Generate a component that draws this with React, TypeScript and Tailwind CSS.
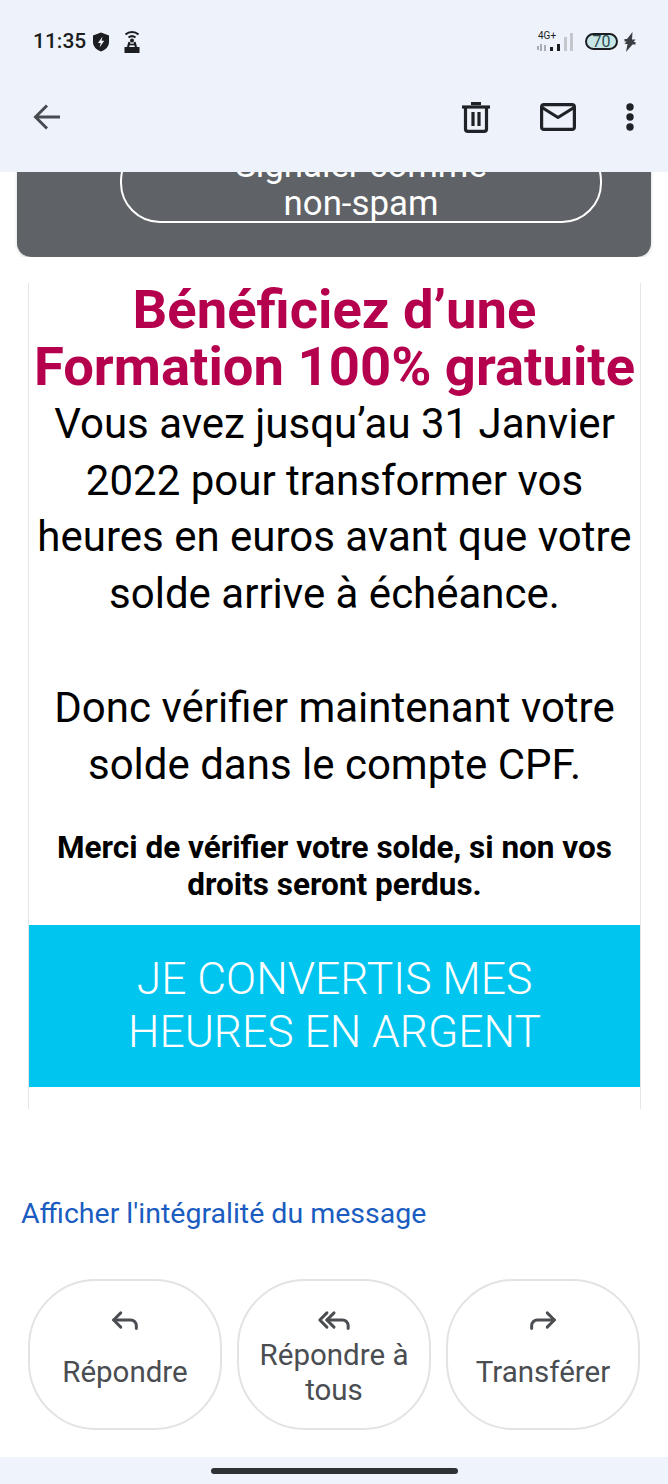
import { Forward, Reply, ReplyAll } from "lucide-react";

const ACTIONS = [
  { label: "Répondre", Icon: Reply },
  { label: "Répondre à tous", Icon: ReplyAll },
  { label: "Transférer", Icon: Forward },
];

function StatusBar() {
  return (
    <div className="flex h-[82px] items-center justify-between pl-[33px] pr-[32px] pt-[1px] text-[#1c1d20]">
      <div className="flex items-center">
        <span className="text-[21px] font-medium leading-none">11:35</span>
        <svg viewBox="0 0 18 20" className="ml-[6px] h-[20px] w-[18px]">
          <path d="M9 0.5 L17 3.5 V10 C17 14.5 13.5 18 9 19.5 C4.5 18 1 14.5 1 10 V3.5 Z" fill="#1c1d20" />
          <path d="M10.5 4.5 L6 11 H8.7 L7.6 15.5 L12.2 8.8 H9.5 Z" fill="#eef3fb" />
        </svg>
        <svg viewBox="0 0 18 24" className="ml-[13px] h-[24px] w-[18px]" fill="none" stroke="#1c1d20">
          <path d="M2.5 4.5 C6 1 12 1 15.5 4.5" strokeWidth="2" />
          <path d="M5.5 7.5 C7.5 5.9 10.5 5.9 12.5 7.5" strokeWidth="2" />
          <circle cx="9" cy="10.5" r="2" fill="#1c1d20" stroke="none" />
          <path d="M6.5 12 L5 17" strokeWidth="2.2" />
          <path d="M11.5 12 L13 17" strokeWidth="2.2" />
          <path d="M6 14.5 H12" strokeWidth="1.6" />
          <rect x="1.5" y="17" width="15" height="6" fill="#1c1d20" stroke="none" />
        </svg>
      </div>
      <div className="flex items-center">
        <div className="relative h-[20px] w-[36px]">
          <span className="absolute left-[1px] top-[-2px] text-[10px] leading-[12px]">4G+</span>
          <svg viewBox="0 0 36 20" className="absolute left-0 top-0 h-[20px] w-[36px]">
            <rect x="0" y="14" width="2" height="4" fill="#a9adb3" />
            <rect x="3" y="12" width="2" height="7" fill="#a9adb3" />
            <rect x="7" y="13" width="2" height="6" fill="#a9adb3" />
            <rect x="13" y="15" width="3" height="4" fill="#1c1d20" />
            <rect x="20" y="12" width="3" height="7" fill="#1c1d20" />
            <rect x="27" y="5" width="3" height="14" fill="#c3c7cc" />
            <rect x="33" y="1" width="3" height="18" fill="#c3c7cc" />
          </svg>
        </div>
        <div className="ml-[12px] flex h-[17px] w-[33px] items-center justify-center rounded-full border-2 border-[#1c1d20] bg-[#c9e6e6] text-[16px] leading-none text-[#2c4a4d]">
          70
        </div>
        <svg viewBox="0 0 12 20" className="ml-[6px] h-[20px] w-[12px]">
          <path d="M8.5 0 L3 7 H0.5 V9.5 H2.5 L0.5 12 H3.5 L2 20 L8.5 12.5 H11.5 V10 H9.5 L11.5 7.5 H8 Z" fill="#3b3e42" />
        </svg>
      </div>
    </div>
  );
}

function Toolbar() {
  return (
    <div className="flex h-[90px] items-center justify-between pb-[20px] pl-[33px] pr-[34px] text-[#1f2226]">
      <svg viewBox="0 0 28 26" className="h-[26px] w-[28px]" fill="none" stroke="#474a4e" strokeWidth="3">
        <path d="M27 13 H3" />
        <path d="M14 1.5 L2.5 13 L14 24.5" />
      </svg>
      <div className="flex items-center">
        <svg viewBox="0 0 28 31" className="h-[31px] w-[28px]" fill="none" stroke="#1f2226" strokeWidth="3.2">
          <path d="M0 5 H28" />
          <path d="M9 1.6 H19" />
          <path d="M3.5 5 V27 Q3.5 29.4 6 29.4 H22 Q24.5 29.4 24.5 27 V5" />
          <path d="M11 10 V24" />
          <path d="M17 10 V24" />
        </svg>
        <svg viewBox="0 0 36 28" className="ml-[50px] h-[28px] w-[36px]" fill="none" stroke="#1f2226" strokeWidth="3.2" strokeLinejoin="round">
          <rect x="1.6" y="1.6" width="32.8" height="24.8" rx="2.5" />
          <path d="M2 4.5 L18 14.5 L34 4.5" />
        </svg>
        <svg viewBox="0 0 8 28" className="ml-[50px] h-[28px] w-[8px]" fill="#1f2226">
          <circle cx="4" cy="4" r="3.7" />
          <circle cx="4" cy="14" r="3.7" />
          <circle cx="4" cy="24" r="3.7" />
        </svg>
      </div>
    </div>
  );
}

function SpamBanner() {
  return (
    <div className="h-[85px] overflow-hidden px-[17px]">
      <div className="-mt-[31px] rounded-[14px] bg-[#5f6368] pb-[34px] pl-[103px] pr-[49px] shadow-[0_1px_3px_rgba(60,64,67,0.25)]">
        <div className="rounded-[40px] border-2 border-white pt-[3px] text-center text-[34.8px] leading-[38px] text-white">
          <div>Signaler comme</div>
          <div className="-mb-[1px]">non-spam</div>
        </div>
      </div>
    </div>
  );
}

function MailBody() {
  return (
    <div className="ml-[28px] mr-[27px] mt-[26px] flex h-[826px] flex-col border-x border-[#e4e6e8] text-center text-black">
      <h1 className="-mt-[2px] mb-[1px] text-[54.4px] font-bold leading-[57px] text-[#b5004e]">
        Bénéficiez d’une
        <br />
        Formation 100% gratuite
      </h1>
      <p className="px-[4px] text-[42px] leading-[56.7px]">
        Vous avez jusqu’au 31 Janvier 2022 pour transformer vos heures en euros avant que votre solde arrive à échéance.
      </p>
      <p className="mt-[57px] px-[4px] text-[42px] leading-[56.7px]">
        Donc vérifier maintenant votre solde dans le compte CPF.
      </p>
      <p className="mt-[36px] px-[20px] text-[31.5px] font-bold leading-[37px]">
        Merci de vérifier votre solde, si non vos droits seront perdus.
      </p>
      <div className="mt-[22px] flex h-[162px] items-center justify-center bg-[#00c5ef] px-[80px] text-[44.4px] font-light leading-[53px] text-white">
        JE CONVERTIS MES HEURES EN ARGENT
      </div>
    </div>
  );
}

function Actions() {
  return (
    <div className="mt-[47px] grid grid-cols-3 gap-[15px] px-[28px]">
      {ACTIONS.map(({ label, Icon }) => (
        <div
          key={label}
          className="flex h-[151px] flex-col items-center rounded-[68px] border-2 border-[#e1e3e5] px-[14px] pt-[22px] text-center text-[#4a4d51]"
        >
          <Icon className="h-[34px] w-[34px] shrink-0" strokeWidth={2.1} />
          <div className="flex flex-1 items-center pb-[20px] text-[29.5px] leading-[35px]">{label}</div>
        </div>
      ))}
    </div>
  );
}

export default function App() {
  return (
    <div className="flex h-[1484px] w-[668px] flex-col overflow-hidden bg-white font-['Roboto',sans-serif]">
      <div className="relative z-10 bg-[#eef3fb]">
        <StatusBar />
        <Toolbar />
      </div>
      <SpamBanner />
      <MailBody />
      <div className="mt-[87px] pl-[21px] text-[28.5px] leading-[36px] text-[#1a5cc0]">Afficher l'intégralité du message</div>
      <Actions />
      <div className="mt-auto flex h-[27px] justify-center bg-[#eff3fb] pt-[11px]">
        <div className="h-[6px] w-[247px] rounded-full bg-[#2f3235]" />
      </div>
    </div>
  );
}
